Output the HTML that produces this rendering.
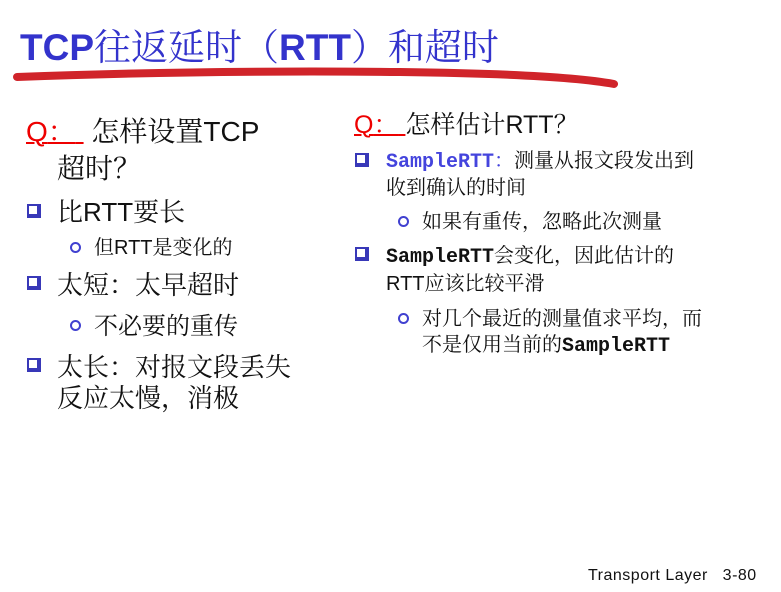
<!DOCTYPE html>
<html><head><meta charset="utf-8"><style>
body{margin:0;width:781px;height:592px;background:#fff;overflow:hidden;position:relative;font-family:"Liberation Sans","Noto Serif CJK SC","Noto Sans CJK SC",serif;color:#111}
.a{position:absolute;white-space:nowrap;line-height:1}
.c{font-family:"Noto Serif CJK SC","Noto Sans CJK SC",serif}
.t{color:#3333cc;font-size:37px}
.t b{font-family:"Liberation Sans",sans-serif;font-weight:bold}
.q{color:#e00;text-decoration:underline;text-decoration-thickness:2px}
.sq{position:absolute;width:14px;height:14px;border:2px solid #3838b8;border-right-width:4px;border-bottom-width:4px;box-sizing:border-box;background:#fff}
.ci{position:absolute;width:11px;height:11px;border:2px solid #4040d0;border-radius:50%;box-sizing:border-box}
.m{font-family:"Liberation Mono",monospace;font-weight:bold}
</style></head><body>
<div class="a t" style="left:20px;top:26px"><b>TCP</b><span class="c">往返延时（</span><b>RTT</b><span class="c">）和超时</span></div>
<svg class="a" style="left:0;top:0" width="781" height="100"><path d="M17 77 Q 200 70 400 72 Q 560 74 614 84" stroke="#d0242a" stroke-width="8" fill="none" stroke-linecap="round"/></svg>

<div class="a" style="left:26px;top:116px;font-size:28px"><span class="q">Q<span class="c">：</span>&nbsp;</span> <span class="c">怎样设置</span>TCP</div>
<div class="a c" style="left:57px;top:153px;font-size:28px">超时？</div>
<div class="sq" style="left:27px;top:204px"></div>
<div class="a" style="left:57px;top:198px;font-size:26px"><span class="c">比</span>RTT<span class="c">要长</span></div>
<div class="ci" style="left:70px;top:242px"></div>
<div class="a" style="left:94px;top:236px;font-size:20px"><span class="c">但</span>RTT<span class="c">是变化的</span></div>
<div class="sq" style="left:27px;top:276px"></div>
<div class="a c" style="left:57px;top:271px;font-size:26px">太短：太早超时</div>
<div class="ci" style="left:70px;top:320px"></div>
<div class="a c" style="left:94px;top:312px;font-size:24px">不必要的重传</div>
<div class="sq" style="left:27px;top:358px"></div>
<div class="a c" style="left:57px;top:353px;font-size:26px">太长：对报文段丢失</div>
<div class="a c" style="left:57px;top:384px;font-size:26px">反应太慢，消极</div>

<div class="a" style="left:354px;top:111px;font-size:25px"><span class="q">Q<span class="c">：</span>&nbsp;</span><span class="c">怎样估计</span>RTT<span class="c">？</span></div>
<div class="sq" style="left:355px;top:153px"></div>
<div class="a" style="left:386px;top:149px;font-size:20px"><span class="m" style="color:#4444dd">SampleRTT</span><span class="c" style="color:#4444dd">：</span><span class="c">测量从报文段发出到</span></div>
<div class="a c" style="left:386px;top:176px;font-size:20px">收到确认的时间</div>
<div class="ci" style="left:398px;top:216px"></div>
<div class="a c" style="left:422px;top:210px;font-size:20px">如果有重传，忽略此次测量</div>
<div class="sq" style="left:355px;top:247px"></div>
<div class="a" style="left:386px;top:244px;font-size:20px"><span class="m">SampleRTT</span><span class="c">会变化，因此估计的</span></div>
<div class="a" style="left:386px;top:272px;font-size:20px">RTT<span class="c">应该比较平滑</span></div>
<div class="ci" style="left:398px;top:313px"></div>
<div class="a c" style="left:422px;top:307px;font-size:20px">对几个最近的测量值求平均，而</div>
<div class="a" style="left:422px;top:333px;font-size:20px"><span class="c">不是仅用当前的</span><span class="m">SampleRTT</span></div>

<div class="a" style="left:588px;top:568px;font-size:16px;letter-spacing:0.5px">Transport Layer&nbsp;&nbsp;&nbsp;3-80</div>
</body></html>
